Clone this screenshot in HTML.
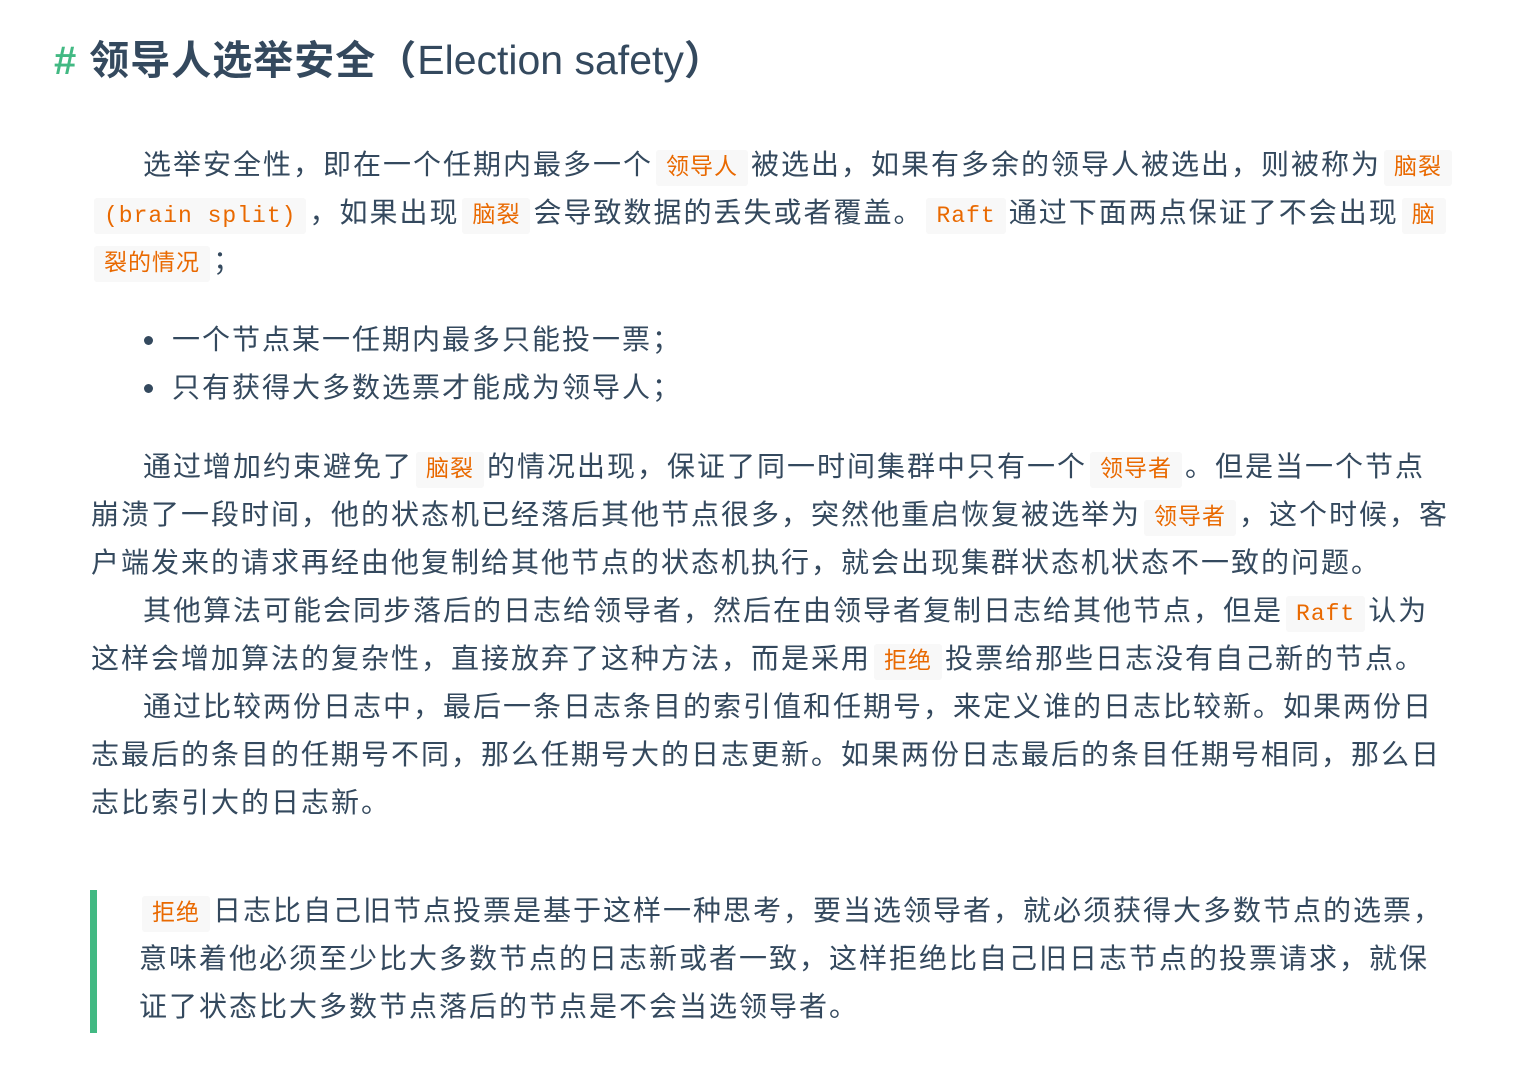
<!DOCTYPE html>
<html><head><meta charset="utf-8"><style>
body{margin:0;background:#fff;color:#34495e;font-family:"Liberation Sans","Noto Sans CJK SC",sans-serif;}
.wrap{position:absolute;left:91px;top:0;width:1400px;}
h1{position:absolute;left:-37px;top:30px;margin:0;font-size:40px;font-weight:bold;line-height:60px;white-space:nowrap;color:#34495e;letter-spacing:1px;}
h1 .h{color:#42b983;margin-right:12px;}
h1 .e{font-weight:normal;font-size:41px;letter-spacing:0;}
.l{position:absolute;white-space:nowrap;font-size:28px;letter-spacing:2px;line-height:48px;height:48px;}
code{font-family:"Liberation Mono","Noto Sans CJK SC",monospace;font-size:23px;color:#e96900;background:#f8f8f8;border-radius:3px;padding:5px 10px;letter-spacing:1px;margin:0 3px;}
.bq{position:absolute;left:90px;top:890px;width:7px;height:143px;background:#42b983;}
.dot{position:absolute;width:9px;height:9px;border-radius:50%;background:#34495e;}
</style></head><body>
<div class="wrap">
<h1><span class="h">#</span>领导人选举安全（<span class="e">Election safety</span>）</h1>
<div class="l" style="left:52px;top:141px">选举安全性，即在一个任期内最多一个<code>领导人</code>被选出，如果有多余的领导人被选出，则被称为<code>脑裂</code></div>
<div class="l" style="left:0;top:189px"><code>(brain split)</code>，如果出现<code>脑裂</code>会导致数据的丢失或者覆盖。<code>Raft</code>通过下面两点保证了不会出现<code>脑</code></div>
<div class="l" style="left:0;top:237px"><code>裂的情况</code>；</div>
<div class="dot" style="left:53px;top:336px"></div>
<div class="l" style="left:81px;top:316px">一个节点某一任期内最多只能投一票；</div>
<div class="dot" style="left:53px;top:384px"></div>
<div class="l" style="left:81px;top:364px">只有获得大多数选票才能成为领导人；</div>
<div class="l" style="left:52px;top:443px">通过增加约束避免了<code>脑裂</code>的情况出现，保证了同一时间集群中只有一个<code>领导者</code>。但是当一个节点</div>
<div class="l" style="left:0;top:491px">崩溃了一段时间，他的状态机已经落后其他节点很多，突然他重启恢复被选举为<code>领导者</code>，这个时候，客</div>
<div class="l" style="left:0;top:539px">户端发来的请求再经由他复制给其他节点的状态机执行，就会出现集群状态机状态不一致的问题。</div>
<div class="l" style="left:52px;top:587px">其他算法可能会同步落后的日志给领导者，然后在由领导者复制日志给其他节点，但是<code>Raft</code>认为</div>
<div class="l" style="left:0;top:635px">这样会增加算法的复杂性，直接放弃了这种方法，而是采用<code>拒绝</code>投票给那些日志没有自己新的节点。</div>
<div class="l" style="left:52px;top:683px">通过比较两份日志中，最后一条日志条目的索引值和任期号，来定义谁的日志比较新。如果两份日</div>
<div class="l" style="left:0;top:731px">志最后的条目的任期号不同，那么任期号大的日志更新。如果两份日志最后的条目任期号相同，那么日</div>
<div class="l" style="left:0;top:779px">志比索引大的日志新。</div>
<div class="l" style="left:48px;top:887px"><code>拒绝</code>日志比自己旧节点投票是基于这样一种思考，要当选领导者，就必须获得大多数节点的选票，</div>
<div class="l" style="left:48px;top:935px">意味着他必须至少比大多数节点的日志新或者一致，这样拒绝比自己旧日志节点的投票请求，就保</div>
<div class="l" style="left:48px;top:983px">证了状态比大多数节点落后的节点是不会当选领导者。</div>
</div>
<div class="bq"></div>
</body></html>
